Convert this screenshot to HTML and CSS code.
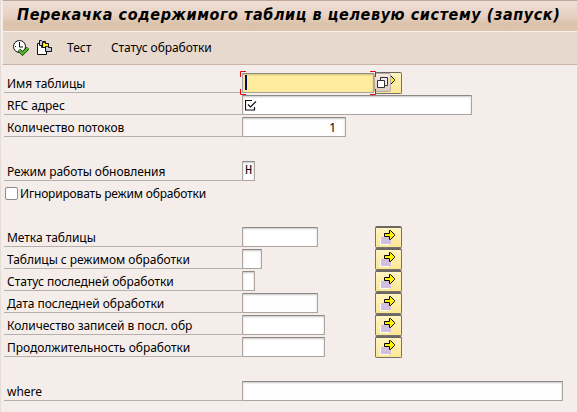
FILE: index.html
```
<!DOCTYPE html>
<html lang="ru">
<head>
<meta charset="utf-8">
<title>Перекачка содержимого таблиц</title>
<link rel="stylesheet" href="styles.css">
</head>
<body>
<svg class="defs" aria-hidden="true">
  <symbol id="arrow" viewBox="0 0 16 16">
    <path d="M0 9h9v7H0z" fill="#fff"/>
    <path d="M1 8h10v7H1z" fill="#d2bfdf"/>
    <path d="M4.500 4.500h5v-3h1l4 4v1l-4 4h-1v-3h-5z" fill="#fff000" stroke="#000"/>
  </symbol>
</svg>
<div class="window">
  <header class="title"><h1>Перекачка содержимого таблиц в целевую систему (запуск)</h1></header>
  <nav class="toolbar">
    <svg class="clock" width="17" height="17" viewBox="0 0 17 17">
      <circle cx="6.5" cy="6.5" r="6" fill="#fff" stroke="#111"/>
      <path d="M6.5 2v5H10M2 6.5h1M6 11h1" fill="none" stroke="#111"/>
      <path d="M6 10l3.500 3.500L15 8" fill="none" stroke="#173b08" stroke-width="3.600"/>
      <path d="M6 10l3.500 3.500L15 8" fill="none" stroke="#58b82b" stroke-width="2"/>
    </svg>
    <svg class="variants" width="16" height="16" viewBox="0 0 16 16">
      <path d="M.5 3.500h4v4h5v7h-9z" fill="#fff" stroke="#111"/>
      <path d="M2.500.5h2l1 1h3v4h-6z" fill="#c9c9df" stroke="#111"/>
      <path d="M5.500 2.500h2l1 1h3v4h-6z" fill="#ffe815" stroke="#111"/>
      <path d="M8.500 6.500h2l1 1h3v4h-6z" fill="#c9c9df" stroke="#111"/>
    </svg>
    <span class="test">Тест</span>
    <span class="status">Статус обработки</span>
  </nav>
  <main class="form">
    <div class="row"><label>Имя таблицы</label><div class="field w132 focus"><i class="caret"></i>
      <svg class="corners" width="136" height="24" viewBox="0 0 136 24"><path d="M.5 6V.5H6M130 .5h5.500V6M.5 18v5.500H6M130 23.500h5.500V18" fill="none" stroke="#e30b13"/></svg></div>
      <button class="more first"><svg width="16" height="16"><use href="#arrow"/></svg></button>
      <span class="help"><svg width="12" height="12" viewBox="0 0 12 12"><path d="M3.500.5h7v8h-7z" fill="#eee" stroke="#333"/><path d="M.5 3.500h7v7h-7z" fill="#fff" stroke="#333"/></svg></span></div>
    <div class="row"><label>RFC адрес</label><div class="field w230"><svg class="required" width="12" height="11" viewBox="0 0 12 11"><path d="M7 .5H.5v9.500h9V7M3 4.500l2.500 2.500L11 1.500" fill="none" stroke="#111" stroke-width="1.200"/></svg></div></div>
    <div class="row"><label>Количество потоков</label><div class="field w104 number">1</div></div>
    <div class="row blank"></div>
    <div class="row"><label>Режим работы обновления</label><div class="field w13 mono">H</div></div>
    <div class="row check"><span class="box"></span><span class="narrow">Игнорировать режим обработки</span></div>
    <div class="row blank"></div>
    <div class="row"><label>Метка таблицы</label><div class="field w76"></div><button class="more"><svg width="16" height="16"><use href="#arrow"/></svg></button></div>
    <div class="row"><label>Таблицы с режимом обработки</label><div class="field w20"></div><button class="more"><svg width="16" height="16"><use href="#arrow"/></svg></button></div>
    <div class="row"><label>Статус последней обработки</label><div class="field w13"></div><button class="more"><svg width="16" height="16"><use href="#arrow"/></svg></button></div>
    <div class="row"><label>Дата последней обработки</label><div class="field w76"></div><button class="more"><svg width="16" height="16"><use href="#arrow"/></svg></button></div>
    <div class="row"><label>Количество записей в посл. обр</label><div class="field w83"></div><button class="more"><svg width="16" height="16"><use href="#arrow"/></svg></button></div>
    <div class="row"><label>Продолжительность обработки</label><div class="field w83"></div><button class="more"><svg width="16" height="16"><use href="#arrow"/></svg></button></div>
    <div class="row blank"></div>
    <div class="row"><label>where</label><div class="field w321"></div></div>
  </main>
</div>
</body>
</html>
```
FILE: styles.css
```
* { box-sizing: border-box; }
body { margin: 0; height: 412px; overflow: hidden; background: #f5edea; color: #000; font: 12px/22px "Noto Sans", sans-serif; }
.defs { position: absolute; width: 0; height: 0; }
svg { display: block; }
.window { height: 412px; border-left: 1px solid #e6dcd7; }
.title { height: 32px; margin-left: 1px; padding-left: 14px; border-top: 1px solid #bfa797; border-left: 1px solid #f8eee9; border-bottom: 1px solid #faf0e8; background: linear-gradient(#eedfd7, #e7d3c6 45%, #dbc3ab 75%, #dcc4ad); }
h1 { margin: 0; font: italic bold 16px/27px "DejaVu Sans Condensed", "DejaVu Sans", sans-serif; letter-spacing: .58px; color: #000; white-space: nowrap; }
.toolbar { height: 33px; margin-left: 1px; display: flex; align-items: center; border-left: 1px solid #f8eee9; border-bottom: 1px solid #c9b2a6; background: #e8d9cf; padding-left: 10px; white-space: nowrap; }
.variants { margin-left: 7px; }
.test { margin-left: 14px; width: 44px; }
.status { letter-spacing: -.08px; }
.form { padding: 6px 0 0 3px; }
.row { height: 22px; display: flex; position: relative; white-space: nowrap; }
label { width: 238px; height: 22px; padding-left: 3px; line-height: 26px; letter-spacing: -.04px; border-bottom: 1px solid #b5b0ae; }
.field { height: 20px; margin-top: 2px; border: 1px solid #aaa5a1; border-top-color: #8d8986; border-radius: 1px; background: #fff; box-shadow: inset 0 1px 2px #c9c7c5; position: relative; }
.w13 { width: 13px; } .w20 { width: 20px; } .w76 { width: 76px; } .w83 { width: 83px; }
.w104 { width: 104px; } .w132 { width: 132px; } .w230 { width: 230px; } .w321 { width: 321px; }
.focus { background: #ffec9c; box-shadow: inset 0 1px 2px #d1bd78; }
.caret { display: block; width: 2px; height: 15px; margin: 1px 0 0 2px; background: #001060; }
.corners { position: absolute; left: -3px; top: -3px; z-index: 3; }
.more { position: absolute; left: 371px; top: 1px; display: flex; align-items: flex-start; width: 27px; height: 22px; padding: 1px 0 0 4px; border: 1px solid #77716b; border-top: 2px solid #6c6762; border-radius: 2px; background: linear-gradient(#fff4c2, #fbe793); z-index: 1; }
.first { border-top-width: 1px; padding-top: 1px; }
.help { position: absolute; z-index: 2; left: 370px; top: 2px; width: 17px; height: 19px; padding: 3px 0 0 2px; border: 1px solid #b7aaa3; border-radius: 2px; background: linear-gradient(#f5e9e3, #decabf); }
.required { margin: 4px 0 0 2px; }
.number { padding-right: 9px; text-align: right; line-height: 19px; }
.mono { font: 12px/19px "Liberation Mono", monospace; text-align: center; }
.box { width: 13px; height: 13px; margin: 6px 2px 0 1px; border: 1px solid #8f8b88; border-radius: 2px; background: #fff; }
.check { line-height: 25px; }
.narrow { letter-spacing: -.18px; }
```
